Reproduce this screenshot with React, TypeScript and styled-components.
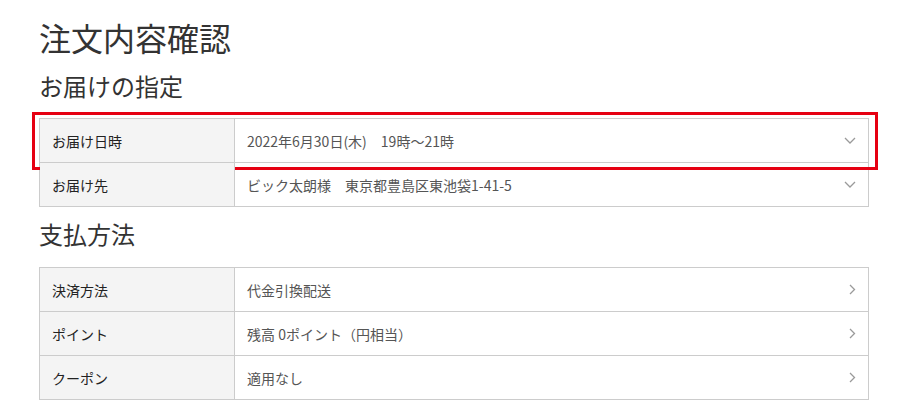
import React from 'react';
import styled, { createGlobalStyle } from 'styled-components';

type Row = {
  label: string;
  value: string;
  kind: 'select' | 'link';
  highlight?: boolean;
};

const deliveryRows: Row[] = [
  { label: 'お届け日時', value: '2022年6月30日(木)　19時〜21時', kind: 'select', highlight: true },
  { label: 'お届け先', value: 'ビック太朗様　東京都豊島区東池袋1-41-5', kind: 'select' },
];

const paymentRows: Row[] = [
  { label: '決済方法', value: '代金引換配送', kind: 'link' },
  { label: 'ポイント', value: '残高 0ポイント（円相当）', kind: 'link' },
  { label: 'クーポン', value: '適用なし', kind: 'link' },
];

const GlobalStyle = createGlobalStyle`
  body {
    margin: 0;
    background: #ffffff;
    font-family: 'Noto Sans CJK JP', 'Noto Sans', sans-serif;
    color: #333333;
  }
`;

const ChevronDown = () => (
  <svg width='12' height='7' viewBox='0 0 12 7' fill='none'>
    <path d='M1 1l5 5 5-5' stroke='#9a9a9a' strokeWidth='1.3' />
  </svg>
);

const ChevronRight = () => (
  <svg width='7' height='11' viewBox='0 0 7 11' fill='none'>
    <path d='M1 1l4.5 4.5L1 10' stroke='#9a9a9a' strokeWidth='1.3' />
  </svg>
);

const InfoTable = ({ rows }: { rows: Row[] }) => (
  <Table>
    {rows.map((row) => (
      <TableRow key={row.label}>
        <Label>{row.label}</Label>
        <Value>
          <span>{row.value}</span>
          {row.kind === 'select' ? <ChevronDown /> : <ChevronRight />}
        </Value>
        {row.highlight && <Highlight />}
      </TableRow>
    ))}
  </Table>
);

const App = () => {
  return (
    <Page>
      <GlobalStyle />
      <PageTitle>注文内容確認</PageTitle>
      <SectionTitle>お届けの指定</SectionTitle>
      <InfoTable rows={deliveryRows} />
      <SectionTitle $spaced>支払方法</SectionTitle>
      <InfoTable rows={paymentRows} />
    </Page>
  );
};

const Page = styled.div`
  width: 830px;
  padding: 18px 0 0 39px;
`;

const PageTitle = styled.h1`
  margin: 0;
  font-size: 32px;
  font-weight: 400;
  line-height: 38px;
  color: #333333;
`;

const SectionTitle = styled.h2<{ $spaced?: boolean }>`
  margin: ${({ $spaced }) => ($spaced ? '12px 0 18px 0' : '15px 0 17px 0')};
  font-size: 24px;
  font-weight: 400;
  line-height: 30px;
  color: #333333;
`;

const Table = styled.div`
  border: 1px solid #cccccc;
  border-top: none;
`;

const TableRow = styled.div`
  position: relative;
  display: grid;
  grid-template-columns: 195px 1fr;
  height: 44px;
  border-top: 1px solid #cccccc;
  box-sizing: border-box;
`;

const Label = styled.div`
  display: flex;
  align-items: center;
  padding-left: 12px;
  background-color: #f4f4f4;
  border-right: 1px solid #cccccc;
  font-size: 14px;
  color: #222222;
`;

const Value = styled.div`
  display: flex;
  align-items: center;
  justify-content: space-between;
  padding: 0 12px 0 12px;
  font-size: 14px;
  color: #555555;
`;

const Highlight = styled.div`
  position: absolute;
  left: -8px;
  top: -7px;
  right: -10px;
  bottom: -8px;
  border: 3px solid #e60012;
  pointer-events: none;
`;

export default App;
